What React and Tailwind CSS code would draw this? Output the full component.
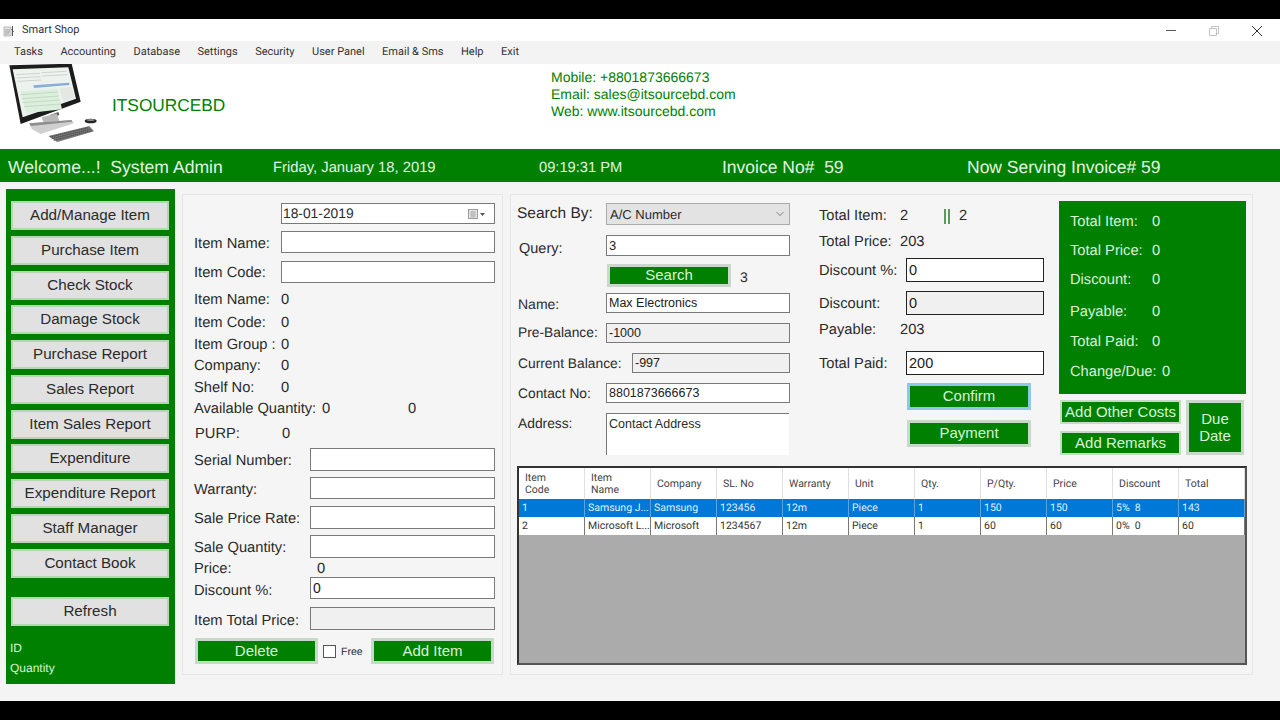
import { ChevronDown } from "lucide-react";

const sideButtons = [
  "Add/Manage Item",
  "Purchase Item",
  "Check Stock",
  "Damage Stock",
  "Purchase Report",
  "Sales Report",
  "Item Sales Report",
  "Expenditure",
  "Expenditure Report",
  "Staff Manager",
  "Contact Book",
];

const menu = ["Tasks", "Accounting", "Database", "Settings", "Security", "User Panel", "Email & Sms", "Help", "Exit"];

const columns = [
  "Item Code",
  "Item Name",
  "Company",
  "SL. No",
  "Warranty",
  "Unit",
  "Qty.",
  "P/Qty.",
  "Price",
  "Discount",
  "Total",
];

const rows = [
  ["1", "Samsung J...", "Samsung", "123456", "12m", "Piece", "1", "150", "150", "5%  8", "143"],
  ["2", "Microsoft L...", "Microsoft", "1234567", "12m", "Piece", "1", "60", "60", "0%  0", "60"],
];

const GreenButton = ({ className = "", children }) => (
  <button className={`flex items-center justify-center bg-[#008000] border-[3px] border-[#c9d9c9] pb-[2px] text-[#d8f3d8] text-[15px] leading-none ${className}`}>
    {children}
  </button>
);

const Field = ({ value = "", className = "" }) => (
  <input
    readOnly
    value={value}
    className={`block border border-[#7a7a7a] bg-white px-[2px] text-[14px] text-[#222] outline-none ${className}`}
  />
);

const LogoPc = () => (
  <svg viewBox="0 12 330 255" className="w-[110px] h-[85px] shrink-0">
    <polygon points="28,16 215,11 242,125 62,192" fill="#1c1c1c" />
    <polygon points="38,28 205,22 228,116 68,172" fill="#eef2ee" />
    <path d="M48,44 L120,40 M50,54 L122,50 M52,64 L124,60 M124,38 L200,34 M126,48 L202,44" stroke="#b9c4bb" strokeWidth="2" />
    <polygon points="100,76 207,68 209,75 102,84" fill="#86aed6" />
    <polygon points="60,94 172,86 186,148 80,160" fill="#dcefdd" />
    <path d="M62,104 L174,96 M65,116 L177,108 M68,128 L180,120 M72,140 L183,132" stroke="#b8ccb9" strokeWidth="2" />
    <polygon points="178,84 214,80 224,112 190,126" fill="#e4e8e4" />
    <polygon points="150,165 175,156 178,165 152,174" fill="#555" />
    <polygon points="125,172 170,160 178,182 132,192" fill="#b9b9b9" />
    <polygon points="88,190 215,180 222,190 122,222 96,208" fill="#cfcfcf" />
    <polygon points="88,190 215,180 216,185 92,198" fill="#8e8e8e" />
    <polygon points="145,228 268,198 282,214 172,246" fill="#777" />
    <path d="M150,231 L264,203 M155,236 L269,208 M161,241 L275,212" stroke="#3d3d3d" strokeWidth="2.5" strokeDasharray="4 2" />
    <ellipse cx="272" cy="183" rx="18" ry="7" fill="#222" />
    <ellipse cx="272" cy="180" rx="12" ry="3" fill="#888" />
  </svg>
);

const WindowIcon = () => (
  <svg viewBox="0 0 12 12" className="w-[12px] h-[12px]">
    <path d="M1 2h7v9H1z" fill="#e4e4e4" stroke="#a8a8a8" strokeWidth="0.8" />
    <path d="M2 5h5M2 7h5M2 9h4" stroke="#8a8a8a" strokeWidth="0.8" />
    <path d="M9.5 1v10M8.5 4l2 3" stroke="#555" strokeWidth="1" />
  </svg>
);

const CalendarIcon = () => (
  <svg viewBox="0 0 18 10" className="w-[18px] h-[10px] shrink-0">
    <rect x="0.5" y="0.5" width="9" height="9" fill="#e6e6e6" stroke="#9a9a9a" />
    <path d="M2 3h6M2 5h6M2 7h6M4 2v7M6 2v7" stroke="#a5a5a5" strokeWidth="0.7" />
    <path d="M12 4h5l-2.5 3z" fill="#555" />
  </svg>
);

const LeftLabelRow = ({ className = "", label, labelWidth = "w-[87px]", labelClass = "mt-[4px]", children }) => (
  <div className={`flex items-center shrink-0 ${className}`}>
    <span className={`shrink-0 whitespace-nowrap ${labelWidth} ${labelClass}`}>{label}</span>
    {children}
  </div>
);

const SummaryLine = ({ className = "", label, value, labelWidth = "w-[82px]" }) => (
  <div className={`flex items-center h-[20px] pt-[2px] shrink-0 ${className}`}>
    <span className={`shrink-0 whitespace-nowrap ${labelWidth}`}>{label}</span>
    <span>{value}</span>
  </div>
);

export default function App() {
  return (
    <div className="w-[1280px] h-[720px] bg-black pt-[19px] pb-[19px] overflow-hidden [text-rendering:geometricPrecision] font-['Liberation_Sans',Arial,sans-serif] text-[14.7px] text-[#2b2b2b]">
      <div className="h-full flex flex-col bg-white">
        {/* title bar */}
        <div className="h-[22px] shrink-0 flex items-center pl-[3px] pt-[1px] bg-white font-['Roboto',sans-serif] text-[11px] text-[#333]">
          <WindowIcon />
          <span className="ml-[7px]">Smart Shop</span>
          <div className="ml-auto flex items-center">
            <span className="w-[10px] h-[1px] bg-[#555] mr-[33px]" />
            <svg viewBox="0 0 10 10" className="w-[10px] h-[10px] mr-[33px]">
              <path d="M0.5 2.5h7v7h-7zM2.5 2.5v-2h7v7h-2" fill="none" stroke="#c4c4c4" strokeWidth="1" />
            </svg>
            <svg viewBox="0 0 10 10" className="w-[10px] h-[10px] mr-[18px]">
              <path d="M0 0l10 10M10 0L0 10" stroke="#333" strokeWidth="1" />
            </svg>
          </div>
        </div>

        {/* menu */}
        <div className="h-[23px] shrink-0 flex items-center gap-[17.5px] pl-[14px] pb-[1px] bg-[#f3f3f3] font-['Roboto',sans-serif] text-[11px] text-[#333]">
          {menu.map((item) => (
            <span key={item}>{item}</span>
          ))}
        </div>

        {/* header */}
        <div className="h-[85px] shrink-0 flex items-center bg-white text-[#008000]">
          <LogoPc />
          <span className="ml-[2px] mt-[-2px] w-[439px] text-[17.3px]">ITSOURCEBD</span>
          <div className="mt-[-25px] text-[14px] leading-[17px]">
            <div>Mobile: +8801873666673</div>
            <div>Email: sales@itsourcebd.com</div>
            <div>Web: www.itsourcebd.com</div>
          </div>
        </div>

        {/* status bar */}
        <div className="h-[33px] shrink-0 flex items-center pt-[3px] bg-[#008000] text-[#e2f5e2] whitespace-pre">
          <span className="ml-[8px] w-[265px] text-[17.6px]">Welcome...!  System Admin</span>
          <span className="w-[266px] pt-[2px] text-[14.8px]">Friday, January 18, 2019</span>
          <span className="w-[183px] pt-[2px] text-[14.7px]">09:19:31 PM</span>
          <span className="w-[245px] text-[17.5px]">Invoice No#  59</span>
          <span className="text-[17.5px]">Now Serving Invoice# 59</span>
        </div>

        {/* body */}
        <div className="flex-1 flex items-start pl-[6px] bg-[#f4f4f4]">
          {/* sidebar */}
          <div className="mt-[7px] w-[169px] h-[495px] shrink-0 flex flex-col bg-[#008000] pt-[12px] px-[5px]">
            <div className="flex flex-col gap-[5.75px]">
              {sideButtons.map((label) => (
                <button
                  key={label}
                  className="h-[29px] w-[158px] border-[2px] border-[#b5d5b5] bg-[#e1e1e1] text-[15.2px] text-[#2b2b2b]"
                >
                  {label}
                </button>
              ))}
            </div>
            <button className="mt-[19px] h-[29px] w-[158px] border-[2px] border-[#b5d5b5] bg-[#e1e1e1] text-[15.2px] text-[#2b2b2b]">
              Refresh
            </button>
            <div className="mt-[12px] ml-[-1px] text-[12px] leading-[20px] text-[#d8f3d8]">
              <div>ID</div>
              <div>Quantity</div>
            </div>
          </div>

          {/* item panel */}
          <div className="ml-[7px] mt-[12px] w-[321px] h-[481px] shrink-0 flex flex-col border border-[#e6e6e6] bg-[#f5f5f5] pl-[11px] pt-[8px]">
            <div className="ml-[87px] w-[214px] h-[21px] shrink-0 flex items-center justify-between border border-[#7a7a7a] bg-white pl-[1px] pr-[8px] pt-[1px] text-[13.8px]">
              <span>18-01-2019</span>
              <CalendarIcon />
            </div>
            <LeftLabelRow className="mt-[7px] h-[22px]" label="Item Name:" labelClass="mt-[5px]">
              <Field className="w-[214px] h-[22px]" />
            </LeftLabelRow>
            <LeftLabelRow className="mt-[8px] h-[22px]" label="Item Code:" labelClass="mt-[2px]">
              <Field className="w-[214px] h-[22px]" />
            </LeftLabelRow>
            <SummaryLine label="Item Name:" value="0" labelWidth="w-[87px]" className="mt-[6px]" />
            <SummaryLine label="Item Code:" value="0" labelWidth="w-[87px]" className="mt-[3px]" />
            <SummaryLine label="Item Group :" value="0" labelWidth="w-[87px]" className="mt-[2px]" />
            <SummaryLine label="Company:" value="0" labelWidth="w-[87px]" className="mt-[1px]" />
            <SummaryLine label="Shelf No:" value="0" labelWidth="w-[87px]" className="mt-[2px]" />
            <div className="mt-[1px] h-[20px] pt-[2px] shrink-0 flex items-center">
              <span className="w-[128px] shrink-0 whitespace-nowrap">Available Quantity:</span>
              <span className="w-[86px] shrink-0">0</span>
              <span>0</span>
            </div>
            <SummaryLine label="PURP:" value="0" labelWidth="w-[87px]" className="mt-[5px] pl-[1px]" />
            <LeftLabelRow className="mt-[5px] h-[23px]" label="Serial Number:" labelWidth="w-[116px]">
              <Field className="w-[185px] h-[23px]" />
            </LeftLabelRow>
            <LeftLabelRow className="mt-[6px] h-[22px]" label="Warranty:" labelWidth="w-[116px]" labelClass="mt-[5px]">
              <Field className="w-[185px] h-[22px]" />
            </LeftLabelRow>
            <LeftLabelRow className="mt-[7px] h-[23px]" label="Sale Price Rate:" labelWidth="w-[116px]">
              <Field className="w-[185px] h-[23px]" />
            </LeftLabelRow>
            <LeftLabelRow className="mt-[6px] h-[23px]" label="Sale Quantity:" labelWidth="w-[116px]">
              <Field className="w-[185px] h-[23px]" />
            </LeftLabelRow>
            <div className="h-[20px] pt-[2px] shrink-0 flex items-center">
              <span className="w-[123px] shrink-0">Price:</span>
              <span>0</span>
            </div>
            <LeftLabelRow className="mt-[-1px] h-[22px]" label="Discount %:" labelWidth="w-[116px]" labelClass="mt-[7px]">
              <Field value="0" className="w-[185px] h-[22px]" />
            </LeftLabelRow>
            <LeftLabelRow className="mt-[8px] h-[23px]" label="Item Total Price:" labelWidth="w-[116px]" labelClass="mt-[6px]">
              <Field className="w-[185px] h-[23px] !bg-[#f0f0f0]" />
            </LeftLabelRow>
            <div className="mt-[8px] h-[26px] shrink-0 flex items-center">
              <GreenButton className="w-[123px] h-[26px] ml-[1px]">Delete</GreenButton>
              <span className="ml-[5px] w-[13px] h-[13px] border border-[#555] bg-white shrink-0" />
              <span className="ml-[5px] mt-[3px] w-[30px] text-[10.5px]">Free</span>
              <GreenButton className="w-[123px] h-[26px]">Add Item</GreenButton>
            </div>
          </div>

          {/* sale panel */}
          <div className="ml-[7px] mt-[12px] w-[743px] h-[481px] shrink-0 flex flex-col border border-[#e6e6e6] bg-[#f5f5f5] pl-[6px] pt-[6px]">
            <div className="h-[265px] shrink-0 flex">
              {/* customer */}
              <div className="w-[302px] shrink-0 flex flex-col pt-[2px] text-[14.5px]">
                <div className="h-[22px] shrink-0 flex items-center">
                  <span className="w-[89px] shrink-0 text-[15.5px]">Search By:</span>
                  <div className="w-[184px] h-[22px] flex items-center justify-between border border-[#ababab] bg-[#e3e3e3] pl-[3px] pr-[2px] text-[13px] leading-none">
                    <span>A/C Number</span>
                    <ChevronDown size={12} strokeWidth={1.5} className="mr-[1px] text-[#555]" />
                  </div>
                </div>
                <div className="mt-[10px] h-[21px] shrink-0 flex items-center pl-[2px]">
                  <span className="w-[87px] shrink-0 mt-[8px]">Query:</span>
                  <Field value="3" className="w-[184px] h-[21px] !text-[13px]" />
                </div>
                <div className="mt-[8px] h-[22px] shrink-0 flex items-center pl-[90px]">
                  <GreenButton className="w-[124px] h-[23px]">Search</GreenButton>
                  <span className="ml-[9px] mt-[5px] text-[14px]">3</span>
                </div>
                <div className="mt-[7px] h-[20px] shrink-0 flex items-center pl-[1px] text-[14px]">
                  <span className="w-[88px] shrink-0 mt-[2px]">Name:</span>
                  <Field value="Max Electronics" className="w-[184px] h-[20px] !text-[12.5px]" />
                </div>
                <div className="mt-[10px] h-[20px] shrink-0 flex items-center pl-[1px] text-[13.8px]">
                  <span className="w-[88px] shrink-0 whitespace-nowrap">Pre-Balance:</span>
                  <Field value="-1000" className="w-[184px] h-[20px] !bg-[#f0f0f0] !text-[12.5px]" />
                </div>
                <div className="mt-[10px] h-[20px] shrink-0 flex items-center pl-[1px] text-[13.8px]">
                  <span className="w-[114px] shrink-0 whitespace-nowrap mt-[2px]">Current Balance:</span>
                  <Field value="-997" className="w-[158px] h-[20px] !bg-[#f0f0f0] !text-[12.5px]" />
                </div>
                <div className="mt-[10px] h-[20px] shrink-0 flex items-center pl-[1px] text-[13.8px]">
                  <span className="w-[88px] shrink-0 whitespace-nowrap mt-[2px]">Contact No:</span>
                  <Field value="8801873666673" className="w-[184px] h-[20px] !text-[12.5px]" />
                </div>
                <div className="mt-[10px] h-[42px] shrink-0 flex items-start pl-[1px] text-[13.8px]">
                  <span className="w-[88px] shrink-0 mt-[1px]">Address:</span>
                  <textarea
                    readOnly
                    value="Contact Address"
                    className="w-[183px] h-[42px] resize-none border-t border-l border-[#777] bg-white px-[2px] pt-[2px] text-[12.5px] leading-[16px] outline-none"
                  />
                </div>
              </div>

              {/* totals */}
              <div className="w-[240px] shrink-0 flex flex-col pt-[4px]">
                <div className="h-[20px] pt-[2px] shrink-0 flex items-center">
                  <span className="w-[81px] shrink-0">Total Item:</span>
                  <span className="w-[44px] shrink-0">2</span>
                  <span className="w-[2px] h-[15px] bg-[#5a9a5a] shrink-0" />
                  <span className="w-[2px] h-[15px] shrink-0" />
                  <span className="w-[2px] h-[15px] bg-[#5a9a5a] shrink-0" />
                  <span className="ml-[9px]">2</span>
                </div>
                <SummaryLine label="Total Price:" value="203" labelWidth="w-[81px]" className="mt-[6px]" />
                <div className="mt-[7px] h-[24px] shrink-0 flex items-center">
                  <span className="w-[87px] shrink-0 mt-[2px]">Discount %:</span>
                  <Field value="0" className="w-[138px] h-[24px] !border-[#222] !text-[14.5px]" />
                </div>
                <div className="mt-[9px] h-[24px] shrink-0 flex items-center">
                  <span className="w-[87px] shrink-0 mt-[2px]">Discount:</span>
                  <Field value="0" className="w-[138px] h-[24px] !border-[#222] !bg-[#f0f0f0] !text-[14.5px]" />
                </div>
                <SummaryLine label="Payable:" value="203" labelWidth="w-[81px]" className="mt-[4px]" />
                <div className="mt-[12px] h-[24px] shrink-0 flex items-center">
                  <span className="w-[87px] shrink-0 mt-[2px]">Total Paid:</span>
                  <Field value="200" className="w-[138px] h-[24px] !border-[#222] !text-[14.5px]" />
                </div>
                <GreenButton className="mt-[8px] ml-[88px] w-[124px] h-[27px] !border-[#8fc7e8] shrink-0">Confirm</GreenButton>
                <GreenButton className="mt-[10px] ml-[88px] w-[124px] h-[27px] shrink-0">Payment</GreenButton>
              </div>

              {/* summary */}
              <div className="w-[187px] shrink-0 flex flex-col">
                <div className="h-[193px] shrink-0 flex flex-col bg-[#008000] pl-[11px] pt-[10px] text-[#d8f3d8]">
                  <SummaryLine label="Total Item:" value="0" />
                  <SummaryLine label="Total Price:" value="0" className="mt-[9px]" />
                  <SummaryLine label="Discount:" value="0" className="mt-[9px]" />
                  <SummaryLine label="Payable:" value="0" className="mt-[12px]" />
                  <SummaryLine label="Total Paid:" value="0" className="mt-[10px]" />
                  <SummaryLine label="Change/Due:" value="0" labelWidth="w-[92px]" className="mt-[10px]" />
                </div>
                <div className="mt-[6px] ml-[1px] flex gap-[5px]">
                  <div className="flex flex-col gap-[7px]">
                    <GreenButton className="w-[121px] h-[24px] !border-[2px]">Add Other Costs</GreenButton>
                    <GreenButton className="w-[121px] h-[24px] !border-[2px]">Add Remarks</GreenButton>
                  </div>
                  <GreenButton className="w-[58px] h-[55px] !leading-[17px]">
                    Due
                    <br />
                    Date
                  </GreenButton>
                </div>
              </div>
            </div>

            {/* items grid */}
            <div className="w-[730px] h-[199px] shrink-0 border-2 border-[#333] border-r-[#555] border-b-[#555] bg-[#ababab] font-['Roboto',sans-serif] text-[10.5px]">
              <div className="grid grid-cols-[repeat(11,66px)] h-[31px] bg-white text-[#444]">
                {columns.map((col, i) => (
                  <div key={col} className="flex items-center border-r border-[#e0e0e0] leading-[12px] pl-[6px]">
                    <span className={i < 2 ? "w-[40px]" : ""}>{col}</span>
                  </div>
                ))}
              </div>
              {rows.map((row, r) => (
                <div
                  key={row[0]}
                  className={`grid grid-cols-[repeat(11,66px)] h-[18px] ${
                    r === 0 ? "bg-[#0078d7] text-[#dff0ff]" : "bg-white text-[#333]"
                  }`}
                >
                  {row.map((cell, i) => (
                    <div
                      key={i}
                      className={`flex items-center whitespace-pre border-r pl-[3px] ${
                        r === 0 ? "border-[#5aa5e0]" : "border-[#777]"
                      }`}
                    >
                      {cell}
                    </div>
                  ))}
                </div>
              ))}
            </div>
          </div>
        </div>
      </div>
    </div>
  );
}
